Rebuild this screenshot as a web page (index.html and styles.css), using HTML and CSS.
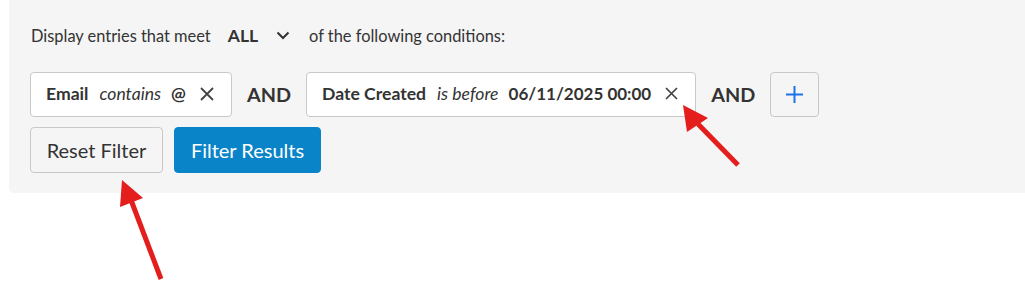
FILE: index.html
```html
<!DOCTYPE html>
<html>
<head>
<meta charset="utf-8">
<link rel="stylesheet" href="styles.css">
</head>
<body>
<div class="panel">
  <div class="intro">
    <span>Display entries that meet</span>
    <span class="mode">ALL</span>
    <svg class="chev" width="14" height="9" viewBox="0 0 14 9"><path d="M1.5 1.5 L7 7 L12.5 1.5" fill="none" stroke="#333" stroke-width="2"/></svg>
    <span>of the following conditions:</span>
  </div>
  <div class="conds">
    <div class="pill">
      <span class="field">Email</span>
      <span class="op">contains</span>
      <span class="val">@</span>
      <svg class="x" width="14" height="14" viewBox="0 0 14 14"><path d="M1 1 L13 13 M13 1 L1 13" stroke="#444" stroke-width="1.8"/></svg>
    </div>
    <span class="and">AND</span>
    <div class="pill">
      <span class="field">Date Created</span>
      <span class="op">is before</span>
      <span class="val date">06/11/2025 00:00</span>
      <svg class="x" width="13" height="13" viewBox="0 0 13 13"><path d="M1 1 L12 12 M12 1 L1 12" stroke="#444" stroke-width="1.7"/></svg>
    </div>
    <span class="and">AND</span>
    <button class="add"><svg width="17" height="17" viewBox="0 0 17 17"><path d="M8.5 0 V17 M0 8.5 H17" stroke="#1a73e8" stroke-width="2"/></svg></button>
  </div>
  <div class="actions">
    <button class="btn reset">Reset Filter</button>
    <button class="btn primary">Filter Results</button>
  </div>
</div>
<svg class="arrows" width="1025" height="282" viewBox="0 0 1025 282">
  <line x1="738" y1="165" x2="698" y2="124" stroke="#e41d1d" stroke-width="5"/>
  <polygon points="683,105 687,132 708,118" fill="#e41d1d"/>
  <line x1="161" y1="279" x2="131" y2="200" stroke="#e41d1d" stroke-width="5"/>
  <polygon points="122,180 120,207 143,198" fill="#e41d1d"/>
</svg>
</body>
</html>
```
FILE: styles.css
```css
html, body {
  margin: 0;
  padding: 0;
  background: #fff;
}
body {
  font-family: Lato, "Open Sans", sans-serif;
  color: #333;
  position: relative;
  width: 1025px;
  height: 282px;
  overflow: hidden;
}
.panel {
  margin-left: 9px;
  background: #f5f5f5;
  border-radius: 0 0 0 5px;
  padding: 22px 0 20px 21px;
}
.intro {
  height: 26px;
  display: flex;
  align-items: center;
  font-size: 16.4px;
  padding-left: 1px;
  margin-bottom: 24px;
}
.mode {
  font-weight: 700;
  font-size: 17.5px;
  margin-left: 17px;
}
.chev {
  margin-left: 18px;
  margin-right: 19px;
}
.conds {
  display: flex;
  align-items: center;
  height: 45px;
  margin-bottom: 10px;
}
.pill {
  box-sizing: border-box;
  height: 45px;
  display: flex;
  align-items: center;
  background: #fff;
  border: 1px solid #c9c9c9;
  border-radius: 4px;
  padding: 0 17px 2px 15px;
  font-size: 17.6px;
}
.field {
  font-weight: 700;
}
.op {
  font-style: italic;
  margin-left: 11px;
}
.val {
  font-weight: 700;
  margin-left: 10px;
}
.date {
  font-size: 17px;
}
.x {
  margin-left: 14px;
}
.and {
  font-weight: 700;
  font-size: 19.8px;
  margin: 0 15px 2px;
}
.add {
  box-sizing: border-box;
  width: 49px;
  height: 45px;
  border: 1px solid #c9c9c9;
  border-radius: 4px;
  background: #f5f5f5;
  display: flex;
  align-items: center;
  justify-content: center;
  padding: 0;
}
.actions {
  display: flex;
  gap: 11px;
}
.btn {
  box-sizing: border-box;
  height: 46px;
  border-radius: 4px;
  font-family: Lato, "Open Sans", sans-serif;
  font-size: 20px;
  padding: 0;
}
.reset {
  width: 133px;
  background: #f5f5f5;
  border: 1px solid #c9c9c9;
  color: #333;
}
.primary {
  width: 147px;
  background: #0a84c8;
  border: 1px solid #0a84c8;
  color: #fff;
}
.arrows {
  position: absolute;
  left: 0;
  top: 0;
  pointer-events: none;
}
```
